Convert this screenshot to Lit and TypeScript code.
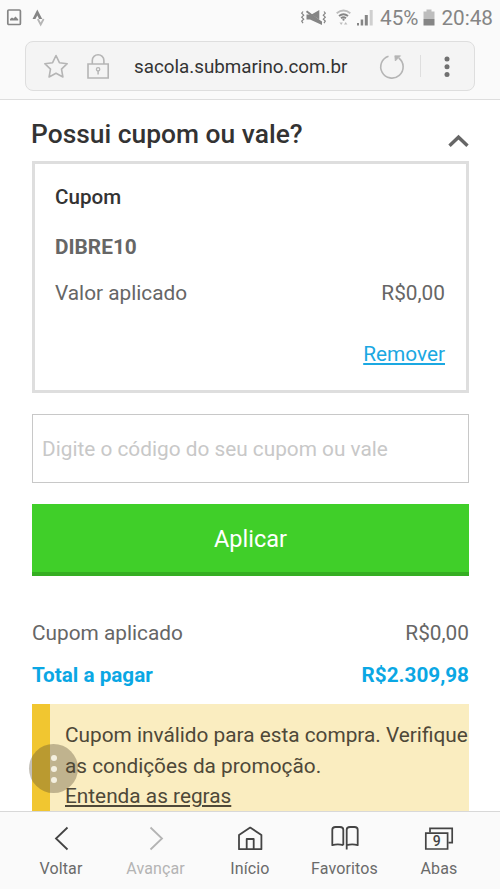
import { LitElement, html, css, svg } from "lit";
import { customElement } from "lit/decorators.js";

const navItems = [
  { label: "Voltar", off: false, icon: svg`<path d="M22.500 4.500 11 15.500 22.500 26.500"/>` },
  { label: "Avançar", off: true, icon: svg`<path d="M10.500 4.500 22 15.500 10.500 26.500"/>` },
  {
    label: "Início",
    off: false,
    icon: svg`<path d="M5 26.200V11.900L16.200 4.600l11.200 7.300V26.200zM12.700 26.200V16h7V26.200" stroke-linejoin="round"/>`,
  },
  {
    label: "Favoritos",
    off: false,
    icon: svg`<path d="M14.300 22.200V6.800Q14.300 4 11 4H6.500Q3.300 4 3.300 6.800V22.200Q8.800 20.600 14.300 22.200M17.700 26.400V6.800Q17.700 4 21 4h4.500Q28.700 4 28.700 6.800V22.200Q23.200 20.600 17.700 22.200" stroke-linejoin="round"/>`,
  },
  {
    label: "Abas",
    off: false,
    icon: svg`<path d="M7 9.500V5.400H29.200V19.600H25.400" stroke-width="1.700"/><path d="M2.800 10.200H24.600V26H2.800z" stroke-width="1.700"/><text x="13.700" y="22.900" class="count">9</text>`,
  },
];

@customElement("app-root")
export class AppRoot extends LitElement {
  static styles = css`
    :host {
      display: flex;
      flex-direction: column;
      width: 500px;
      height: 889px;
      overflow: hidden;
      position: relative;
      background: #fff;
      font-family: Roboto, sans-serif;
      color: #666;
      font-size: 20.800px;
      line-height: 30px;
    }
    * { box-sizing: border-box; }
    svg { display: block; flex: none; fill: none; stroke: currentColor; }
    .top {
      flex: none;
      height: 100px;
      background: #fafafa;
      border-bottom: 1px solid #dedede;
    }
    .status {
      height: 36px;
      display: flex;
      justify-content: space-between;
      padding: 0 7px 0 6px;
      color: #858585;
      font-size: 20.700px;
      line-height: 36px;
    }
    .group { display: flex; align-items: center; }
    .pct { margin-left: 6px; }
    .batt { margin: 0 6px 0 5px; }
    .bar {
      width: 450px;
      height: 50px;
      margin: 5px 0 0 25px;
      display: flex;
      align-items: center;
      background: #f4f4f4;
      border: 1px solid #dedede;
      border-radius: 8px;
      color: #b5b5b5;
      padding-left: 16px;
    }
    .lock { margin-left: 16px; }
    .url { flex: none; width: 244px; margin-left: 24px; color: #333; font-size: 18.800px; line-height: 48px; padding-top: 2px; }
    .sep { width: 1px; height: 22px; background: #dedede; margin: 0 21px 0 14px; }
    .main { flex: 1; min-height: 0; overflow: hidden; padding: 0 31px 0 32px; }
    .head { display: flex; justify-content: space-between; height: 61px; }
    .title {
      margin: 0 0 0 -1px;
      font-size: 26.400px;
      font-weight: 500;
      line-height: 32px;
      padding-top: 18px;
      color: #333;
    }
    .chev { margin-top: 33px; color: #666; }
    .card { height: 232px; border: 3px solid #dedede; padding: 18px 21px 0 20px; }
    .sub { margin: 0; font-size: 20.600px; font-weight: 500; color: #333; }
    .code { font-weight: 700; margin-top: 20px; }
    .row { display: flex; justify-content: space-between; }
    .val { margin-top: 16px; }
    .rm { text-align: right; margin-top: 31px; }
    .rm a { color: #1ba8e2; }
    a { text-decoration: underline; text-decoration-thickness: 1.500px; text-underline-offset: 2px; }
    .field {
      display: block;
      width: 100%;
      height: 69px;
      margin-top: 21px;
      border: 1px solid #c8c8c8;
      border-radius: 0;
      padding: 0 9px;
      font: inherit;
      background: #fff;
      outline: 0;
    }
    .field::placeholder { color: #c8c8c8; opacity: 1; }
    .apply {
      display: block;
      width: 100%;
      height: 72px;
      margin-top: 21px;
      border: 0;
      border-bottom: 4px solid #35ae22;
      background: #40cf29;
      color: #fff;
      font: inherit;
      font-size: 23.500px;
      padding: 2px 0 0;
    }
    .applied { margin-top: 42px; }
    .total { margin-top: 12px; font-weight: 700; font-size: 20.700px; color: #0aa7e4; }
    .alert {
      margin-top: 14px;
      height: 130px;
      background: #faedc0;
      border-left: 18px solid #f1c630;
      padding: 16px 0 0 15px;
      color: #4e4838;
      line-height: 30.500px;
      white-space: nowrap;
    }
    .fab {
      position: absolute;
      left: 29px;
      top: 744px;
      width: 49px;
      height: 49px;
      border-radius: 50%;
      background: rgba(82, 72, 48, 0.350);
      display: flex;
      flex-direction: column;
      align-items: center;
      justify-content: center;
      gap: 5px;
    }
    .fab i { width: 6px; height: 6px; border-radius: 50%; background: #f4f0e0; }
    .nav {
      flex: none;
      height: 78px;
      display: grid;
      grid-template-columns: repeat(5, 94.500px);
      justify-content: center;
      background: #fafafa;
      border-top: 1px solid #d8d8d8;
    }
    .item {
      display: flex;
      flex-direction: column;
      align-items: center;
      padding-top: 11px;
      font-size: 16px;
      letter-spacing: 0.120px;
      line-height: 20px;
      color: #6a6a6a;
    }
    .item svg { color: #444; stroke-width: 1.800; margin-bottom: 4px; }
    .item.off, .item.off svg { color: #b4b4b4; }
    .count { font-size: 14px; fill: #444; stroke: none; text-anchor: middle; font-weight: 500; }
  `;

  render() {
    return html`
      <header class="top">
        <div class="status">
          <div class="group">
            <svg width="40" height="36" viewBox="0 0 40 36">
              <rect x="1.800" y="10" width="12.600" height="14.500" rx="1" stroke-width="1.700" />
              <path d="M4 20.500V19l2-1.600 1.500 1 2-2 2.700 2.800v1.300z" fill="currentColor" stroke="none" />
              <path d="M26.500 19 31.300 9.500 36.200 19h-3.100l-1.800-3.600-1.900 3.600z" fill="currentColor" stroke="none" />
              <path d="M31.800 19 34.700 24.500 37.600 19" stroke="#b5b5b5" stroke-width="1.800" />
            </svg>
          </div>
          <div class="group">
            <svg width="74" height="36" viewBox="300 0 74 36">
              <path d="M303 11.500l-1.300 1.700 2 2-2 2 2 2-2 2 1.300 2M324 11.500l1.300 1.700-2 2 2 2-2 2 2 2-1.300 2" stroke-width="1.200" />
              <path d="M306.500 14.500h3.500l12 7.500v3l-12-5.500h-3.500zM311.500 14.500 319.300 10v9.500z" fill="currentColor" stroke="none" />
              <path d="M306.500 11.200 321.500 22.500" stroke-width="2" />
              <path d="M336.700 13.200q6.800-5.400 13.600 0" stroke="#bdbdbd" stroke-width="1.900" />
              <path d="M339 15.900q4.500-3.500 9 0M341 18.300q2.500-2 5 0" stroke-width="1.900" />
              <circle cx="343.500" cy="19.700" r="1.100" fill="currentColor" stroke="none" />
              <path d="M339.500 22.500h3.400l-1.700 2.500zM344 24.500h3.400l-1.700-2.500z" fill="#bdbdbd" stroke="none" />
              <path d="M357 23h2v2.500h-2zM360.700 19.500h2.500v6h-2.500zM364.800 15h3v10.500h-3z" fill="currentColor" stroke="none" />
              <path d="M369.700 10h3v15.500h-3z" fill="#cfcfcf" stroke="none" />
            </svg>
            <span class="pct">45%</span>
            <svg class="batt" width="12" height="36" viewBox="0 0 12 36">
              <path d="M.500 11.500H3.500V9.500h5v2h3V19H.500z" fill="#bdbdbd" stroke="none" />
              <path d="M.500 19h11v6.500H.500z" fill="currentColor" stroke="none" />
            </svg>
            <span>20:48</span>
          </div>
        </div>
        <div class="bar">
          <svg width="28" height="28" viewBox="0 0 28 28">
            <path d="M14 3.500l3.400 7.200 7.800 1-5.700 5.500 1.400 7.800L14 21.200l-6.900 3.800 1.400-7.800-5.700-5.500 7.800-1z" stroke-width="1.600" stroke-linejoin="round" />
          </svg>
          <svg class="lock" width="24" height="28" viewBox="0 0 24 28">
            <path d="M2 12h20.200v14H2zM6.300 12V8.500a5.800 5.800 0 0 1 11.600 0V12" stroke-width="1.600" />
            <circle cx="12.100" cy="17.300" r="1.700" stroke-width="1.300" />
            <path d="M12.100 19V22.500" stroke-width="1.500" />
          </svg>
          <span class="url">sacola.submarino.com.br</span>
          <svg width="28" height="28" viewBox="0 0 28 28">
            <path d="M10.500 4.200A11.200 11.200 0 1 0 20.800 6" stroke-width="1.600" />
            <path d="M16.800 3.800h5.700L17.300 9z" fill="currentColor" stroke-width=".8" />
          </svg>
          <span class="sep"></span>
          <svg width="10" height="24" viewBox="0 0 10 24">
            <g fill="#707070" stroke="none">
              <circle cx="5" cy="5" r="2.500" /><circle cx="5" cy="12.800" r="2.500" /><circle cx="5" cy="20.600" r="2.500" />
            </g>
          </svg>
        </div>
      </header>

      <main class="main">
        <div class="head">
          <h1 class="title">Possui cupom ou vale?</h1>
          <svg class="chev" width="21" height="16" viewBox="0 0 21 16">
            <path d="M1.500 12.700 10.500 4.200l9 8.500" stroke-width="3.400" />
          </svg>
        </div>
        <section class="card">
          <h2 class="sub">Cupom</h2>
          <div class="code">DIBRE10</div>
          <div class="row val"><span>Valor aplicado</span><span>R$0,00</span></div>
          <div class="rm"><a>Remover</a></div>
        </section>
        <input class="field" placeholder="Digite o código do seu cupom ou vale" />
        <button class="apply">Aplicar</button>
        <div class="row applied"><span>Cupom aplicado</span><span>R$0,00</span></div>
        <div class="row total"><span>Total a pagar</span><span>R$2.309,98</span></div>
        <div class="alert">
          Cupom inválido para esta compra. Verifique<br />as condições da promoção.<br /><a>Entenda as regras</a>
        </div>
      </main>

      <div class="fab"><i></i><i></i><i></i></div>

      <nav class="nav">
        ${navItems.map(
          (n) => html`<div class="item ${n.off ? "off" : ""}">
            <svg width="32" height="32" viewBox="0 0 32 32">${n.icon}</svg>
            <span>${n.label}</span>
          </div>`
        )}
      </nav>
    `;
  }
}
